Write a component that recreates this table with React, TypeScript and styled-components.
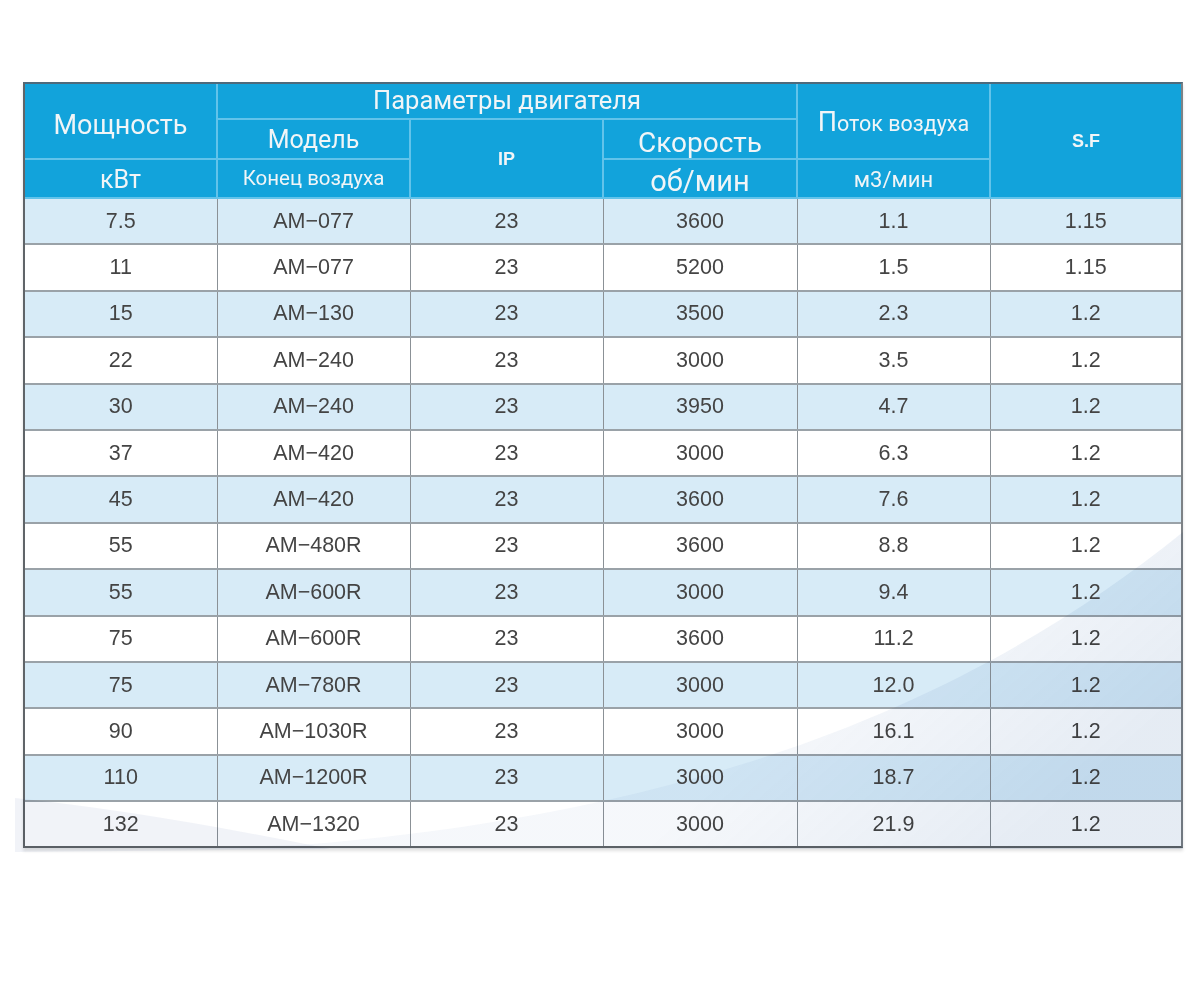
import React from 'react';
import styled, { createGlobalStyle } from 'styled-components';

const GlobalStyle = createGlobalStyle`
  html, body {
    margin: 0;
    padding: 0;
    background: #ffffff;
  }
  body {
    font-family: 'Liberation Sans', Arial, sans-serif;
  }
`;

const HEAD_BG = '#12a3db';
const HEAD_LINE = '#62c3ea';
const ROW_BLUE = '#d7ebf7';

const Page = styled.div`
  width: 1200px;
  height: 1000px;
  padding: 82px 0 0 23px;
  box-sizing: border-box;
`;

const TableWrap = styled.div`
  position: relative;
  width: 1160px;
  box-sizing: border-box;
  border: 2px solid #5f6468;
  border-top-color: #4d6a7c;
  border-right-color: #7d8286;
  box-shadow: 0 3px 3px rgba(0, 0, 0, 0.12);
`;

const Table = styled.table`
  width: 1156px;
  border-collapse: collapse;
  border-style: hidden;
  table-layout: fixed;
`;

// $h is the row height the cell sits in, $shift nudges the text down
const HeadCell = styled.th<{ $size?: number; $bold?: boolean; $h?: number; $shift?: number }>`
  background: ${HEAD_BG};
  color: #f1f5f7;
  border: 2px solid ${HEAD_LINE};
  font-family: ${(p) => (p.$bold ? "'Liberation Sans', Arial, sans-serif" : "Roboto, 'Liberation Sans', sans-serif")};
  font-size: ${(p) => p.$size ?? 24}px;
  font-weight: ${(p) => (p.$bold ? 700 : 400)};
  height: ${(p) => (p.$h ?? 39) - (p.$shift ?? 0) - 2}px;
  padding: ${(p) => p.$shift ?? 0}px 0 0;
  line-height: 1;
  text-align: center;
  vertical-align: middle;
  white-space: nowrap;
`;

const BigLetter = styled.span`
  font-size: 27px;
`;

const Row = styled.tr<{ $alt: boolean }>`
  background: ${(p) => (p.$alt ? ROW_BLUE : '#ffffff')};
`;

const Cell = styled.td`
  height: 44.4px;
  padding: 0;
  text-align: center;
  vertical-align: middle;
  font-size: 21.5px;
  color: #444;
  border-top: 2px solid #9aa2a8;
  border-bottom: 2px solid #9aa2a8;
  border-left: 1px solid #8b9196;
  border-right: 1px solid #8b9196;
`;

const Overlay = styled.svg`
  position: absolute;
  left: -10px;
  top: -2px;
  width: 1176px;
  height: 772px;
  overflow: visible;
  pointer-events: none;
  mix-blend-mode: multiply;
`;

const widths = [192, 193, 193, 194, 193, 191];

const rows: string[][] = [
  ['7.5', 'AM−077', '23', '3600', '1.1', '1.15'],
  ['11', 'AM−077', '23', '5200', '1.5', '1.15'],
  ['15', 'AM−130', '23', '3500', '2.3', '1.2'],
  ['22', 'AM−240', '23', '3000', '3.5', '1.2'],
  ['30', 'AM−240', '23', '3950', '4.7', '1.2'],
  ['37', 'AM−420', '23', '3000', '6.3', '1.2'],
  ['45', 'AM−420', '23', '3600', '7.6', '1.2'],
  ['55', 'AM−480R', '23', '3600', '8.8', '1.2'],
  ['55', 'AM−600R', '23', '3000', '9.4', '1.2'],
  ['75', 'AM−600R', '23', '3600', '11.2', '1.2'],
  ['75', 'AM−780R', '23', '3000', '12.0', '1.2'],
  ['90', 'AM−1030R', '23', '3000', '16.1', '1.2'],
  ['110', 'AM−1200R', '23', '3000', '18.7', '1.2'],
  ['132', 'AM−1320', '23', '3000', '21.9', '1.2'],
];

// decorative swoosh behind the lower rows, drawn in page coordinates
const Swoosh = () => (
  <Overlay viewBox="15 82 1176 772">
    <defs>
      <linearGradient id="tint" gradientUnits="userSpaceOnUse" x1="880" y1="640" x2="1040" y2="820">
        <stop offset="0" stopColor="#5a7fb8" stopOpacity="0.06" />
        <stop offset="1" stopColor="#4a78b0" stopOpacity="0.14" />
      </linearGradient>
    </defs>
    <path d="M 1183 532 C 1000 680, 740 810, 300 845 L 150 849 L 1183 849 Z" fill="url(#tint)" />
    <path d="M 15 798 Q 150 812 330 849 L 15 852 Z" fill="#4a6aa8" fillOpacity="0.08" />
  </Overlay>
);

export default function App() {
  return (
    <>
      <GlobalStyle />
      <Page>
        <TableWrap>
          <Table>
            <colgroup>
              {widths.map((w, i) => (
                <col key={i} style={{ width: w }} />
              ))}
            </colgroup>
            <thead>
              <tr>
                <HeadCell rowSpan={2} $size={27} $h={36} $shift={8}>
                  Мощность
                </HeadCell>
                <HeadCell colSpan={3} $size={25.5} $h={36}>
                  Параметры двигателя
                </HeadCell>
                <HeadCell rowSpan={2} $size={21.5} $h={36} $shift={3}>
                  <BigLetter>П</BigLetter>оток воздуха
                </HeadCell>
                <HeadCell rowSpan={3} $bold $size={18} $h={36}>
                  S.F
                </HeadCell>
              </tr>
              <tr>
                <HeadCell $size={25} $h={40}>
                  Модель
                </HeadCell>
                <HeadCell rowSpan={2} $bold $size={18} $h={40}>
                  IP
                </HeadCell>
                <HeadCell $size={28} $h={40} $shift={8}>
                  Скорость
                </HeadCell>
              </tr>
              <tr>
                <HeadCell $size={25} $h={39} $shift={2}>
                  кВт
                </HeadCell>
                <HeadCell $size={20.5} $h={39}>
                  Конец воздуха
                </HeadCell>
                <HeadCell $size={29} $h={39} $shift={6}>
                  об/мин
                </HeadCell>
                <HeadCell $size={22} $h={39} $shift={3}>
                  м3/мин
                </HeadCell>
              </tr>
            </thead>
            <tbody>
              {rows.map((r, i) => (
                <Row key={i} $alt={i % 2 === 0}>
                  {r.map((v, j) => (
                    <Cell key={j}>{v}</Cell>
                  ))}
                </Row>
              ))}
            </tbody>
          </Table>
          <Swoosh />
        </TableWrap>
      </Page>
    </>
  );
}
